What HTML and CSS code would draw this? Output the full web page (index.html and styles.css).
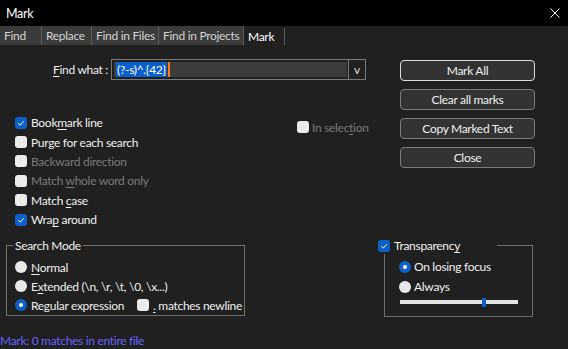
FILE: index.html
```html
<!DOCTYPE html>
<html lang="en">
<head>
<meta charset="utf-8">
<title>Mark</title>
<link rel="stylesheet" href="styles.css">
</head>
<body>
<div class="window">
  <header class="titlebar">
    <span class="title">Mark</span>
    <svg class="close" width="10" height="10" viewBox="0 0 10 10"><path d="M0.5 0.5 L9.5 9.5 M9.5 0.5 L0.5 9.5" stroke="#ffffff" stroke-width="1" fill="none"/></svg>
  </header>
  <nav class="tabs">
    <span class="tab w-find">Find</span>
    <span class="tab w-replace">Replace</span>
    <span class="tab w-files">Find in Files</span>
    <span class="tab w-projects">Find in Projects</span>
    <span class="tab active w-mark">Mark</span>
  </nav>
  <main class="panel">
    <section class="upper">
      <div class="left">
        <div class="findrow">
          <label class="findlabel"><u>F</u>ind what :</label>
          <div class="combo">
            <div class="edit"><span class="sel">(?-s)^.{42}</span><span class="caret"></span></div>
            <div class="drop">v</div>
          </div>
        </div>
        <div class="options">
          <div class="checklist">
            <div class="row"><span class="cb on"><svg width="12" height="12" viewBox="0 0 12 12"><path d="M3.2 6.2 L5.2 8.2 L8.8 4.2" stroke="#ffffff" stroke-width="1" fill="none"/></svg></span><span>Book<u>m</u>ark line</span></div>
            <div class="row"><span class="cb"></span><span>Purge for each search</span></div>
            <div class="row disabled"><span class="cb"></span><span>Backward direction</span></div>
            <div class="row disabled"><span class="cb"></span><span>Match <u>w</u>hole word only</span></div>
            <div class="row"><span class="cb"></span><span>Match <u>c</u>ase</span></div>
            <div class="row"><span class="cb on"><svg width="12" height="12" viewBox="0 0 12 12"><path d="M3.2 6.2 L5.2 8.2 L8.8 4.2" stroke="#ffffff" stroke-width="1" fill="none"/></svg></span><span>Wra<u>p</u> around</span></div>
          </div>
          <div class="row insel disabled"><span class="cb"></span><span>In selec<u>t</u>ion</span></div>
        </div>
      </div>
      <div class="buttons">
        <button class="btn default">Mark All</button>
        <button class="btn">Clear all marks</button>
        <button class="btn">Copy Marked Text</button>
        <button class="btn">Close</button>
      </div>
    </section>
    <section class="lower">
      <fieldset class="group search">
        <legend class="legend">Search Mode</legend>
        <div class="gbody">
          <div class="rrow"><span class="rb"></span><span><u>N</u>ormal</span></div>
          <div class="rrow"><span class="rb"></span><span>E<u>x</u>tended (\n, \r, \t, \0, \x...)</span></div>
          <div class="rrow">
            <span class="ritem"><span class="rb on"></span><span>Regular expression</span></span>
            <span class="citem"><span class="cb"></span><span><u>.</u> matches newline</span></span>
          </div>
        </div>
      </fieldset>
      <fieldset class="group transp">
        <legend class="tlegend"><span class="cb on"><svg width="12" height="12" viewBox="0 0 12 12"><path d="M3.2 6.2 L5.2 8.2 L8.8 4.2" stroke="#ffffff" stroke-width="1" fill="none"/></svg></span><span>Transparenc<u>y</u></span></legend>
        <div class="tbody">
          <div class="trow"><span class="rb on"></span><span>On losing focus</span></div>
          <div class="trow"><span class="rb"></span><span>Always</span></div>
          <div class="slider"><span class="track fill"></span><span class="thumb"></span><span class="track rest"></span></div>
        </div>
      </fieldset>
    </section>
    <div class="status">Mark: 0 matches in entire file</div>
  </main>
</div>
</body>
</html>
```

FILE: styles.css
```css
* { box-sizing: border-box; }
html, body { margin: 0; padding: 0; }
body {
  background: #202020;
  color: #efefef;
  font-family: Lato, "Noto Sans", sans-serif;
  font-size: 12px;
  letter-spacing: -0.3px;
  width: 568px;
  height: 349px;
  overflow: hidden;
}
u { text-decoration: underline; text-underline-offset: 2px; }

.titlebar {
  height: 26px;
  background: #000000;
  display: flex;
  align-items: center;
  justify-content: space-between;
  padding: 0 8px 0 6px;
}
.title { color: #ffffff; font-size: 12.5px; }
.close { display: block; }

.tabs {
  height: 19px;
  display: flex;
  background: #202020;
}
.tab {
  background: #3b3b3b;
  color: #d2d2d2;
  border-right: 1px solid #5c5c5c;
  line-height: 19px;
  padding-left: 4px;
  white-space: nowrap;
  overflow: hidden;
}
.w-find { width: 42px; }
.w-replace { width: 50px; }
.w-files { width: 67px; }
.w-projects { width: 85px; }
.w-mark { width: 41px; }
.tab.active {
  background: #202020;
  color: #ffffff;
  margin-top: 2px;
  line-height: 17px;
}

.upper { display: flex; }
.left { flex: 1; }
.findrow {
  margin-top: 14px;
  display: flex;
  align-items: center;
  height: 21px;
}
.findlabel {
  width: 108px;
  text-align: right;
  margin-right: 3px;
}
.combo {
  width: 255px;
  height: 21px;
  border: 1px solid #7a7a7a;
  display: flex;
}
.edit {
  width: 233px;
  height: 15px;
  margin: 2px 0 2px 2px;
  background: #3c3c3c;
  display: flex;
  align-items: stretch;
}
.sel {
  margin-left: 2px;
  background: #0b5fcb;
  color: #ffffff;
  line-height: 15px;
  padding: 0 1px;
  white-space: nowrap;
}
.caret {
  width: 2px;
  margin-left: 1px;
  background: #ff7a1a;
}
.drop {
  width: 17px;
  margin-left: 1px;
  border-left: 1px solid #7a7a7a;
  text-align: center;
  line-height: 19px;
  color: #dcdcdc;
}

.options {
  margin-top: 33px;
  display: flex;
  align-items: flex-start;
}
.checklist {
  width: 297px;
  padding-left: 15px;
}
.row {
  height: 19.4px;
  display: flex;
  align-items: center;
  gap: 4px;
  white-space: nowrap;
}
.row.disabled { color: #7a7a7a; }
.insel { margin-top: 4.5px; gap: 3px; }

.cb {
  width: 12px;
  height: 12px;
  border-radius: 3px;
  background: #ebebeb;
  flex: none;
  display: block;
}
.cb svg { display: block; }
.cb.on { background: #0c60c8; }

.rb {
  width: 12px;
  height: 12px;
  border-radius: 50%;
  background: #e9e9e9;
  flex: none;
  display: flex;
  align-items: center;
  justify-content: center;
}
.rb.on { background: #0c60c8; }
.rb.on::after {
  content: "";
  width: 4px;
  height: 4px;
  border-radius: 50%;
  background: #ffffff;
}

.buttons {
  width: 135px;
  margin-right: 33px;
  padding-top: 15px;
  display: flex;
  flex-direction: column;
  gap: 8px;
}
.btn {
  height: 21px;
  background: #333333;
  border: 1px solid #7c7c7c;
  border-radius: 4px;
  color: #efefef;
  font-family: inherit;
  font-size: 12px;
  letter-spacing: -0.3px;
  padding: 0;
}
.btn.default { border-color: #dcdcdc; }

.lower {
  display: flex;
  align-items: flex-start;
  margin-top: 8.6px;
}
.group {
  margin: 0;
  padding: 0;
  border: 1px solid #6f6f6f;
  min-width: 0;
}
.search {
  margin-left: 6px;
  width: 239px;
}
.legend {
  margin-left: 6px;
  padding: 0 2px;
  line-height: 16px;
}
.gbody { padding: 4px 0 0 8px; }
.rrow {
  height: 19px;
  display: flex;
  align-items: center;
  gap: 4px;
  white-space: nowrap;
}
.ritem {
  width: 118px;
  display: flex;
  align-items: center;
  gap: 4px;
}
.citem {
  display: flex;
  align-items: center;
  gap: 4px;
}

.transp {
  margin-left: auto;
  margin-right: 35px;
  width: 155px;
  border-left: none;
  border-bottom: none;
}
.tlegend {
  width: 119px;
  padding: 0;
  margin: 0;
  line-height: 16px;
  display: flex;
  align-items: center;
  gap: 4px;
  background: #202020;
}
.tbody {
  margin-left: 6px;
  border-left: 1px solid #6f6f6f;
  border-bottom: 1px solid #6f6f6f;
  padding: 3px 0 8px 14px;
}
.trow {
  height: 20px;
  display: flex;
  align-items: center;
  gap: 3px;
  white-space: nowrap;
}
.slider {
  height: 11px;
  width: 118px;
  margin-left: 1px;
  display: flex;
  align-items: center;
}
.track { height: 4px; background: #e3e3e3; }
.fill { width: 82px; }
.rest { flex: 1; }
.thumb { width: 4px; height: 9px; background: #0c60c8; }

.status {
  margin-top: 16px;
  line-height: 16px;
  color: #6464ff;
  white-space: nowrap;
}
```
